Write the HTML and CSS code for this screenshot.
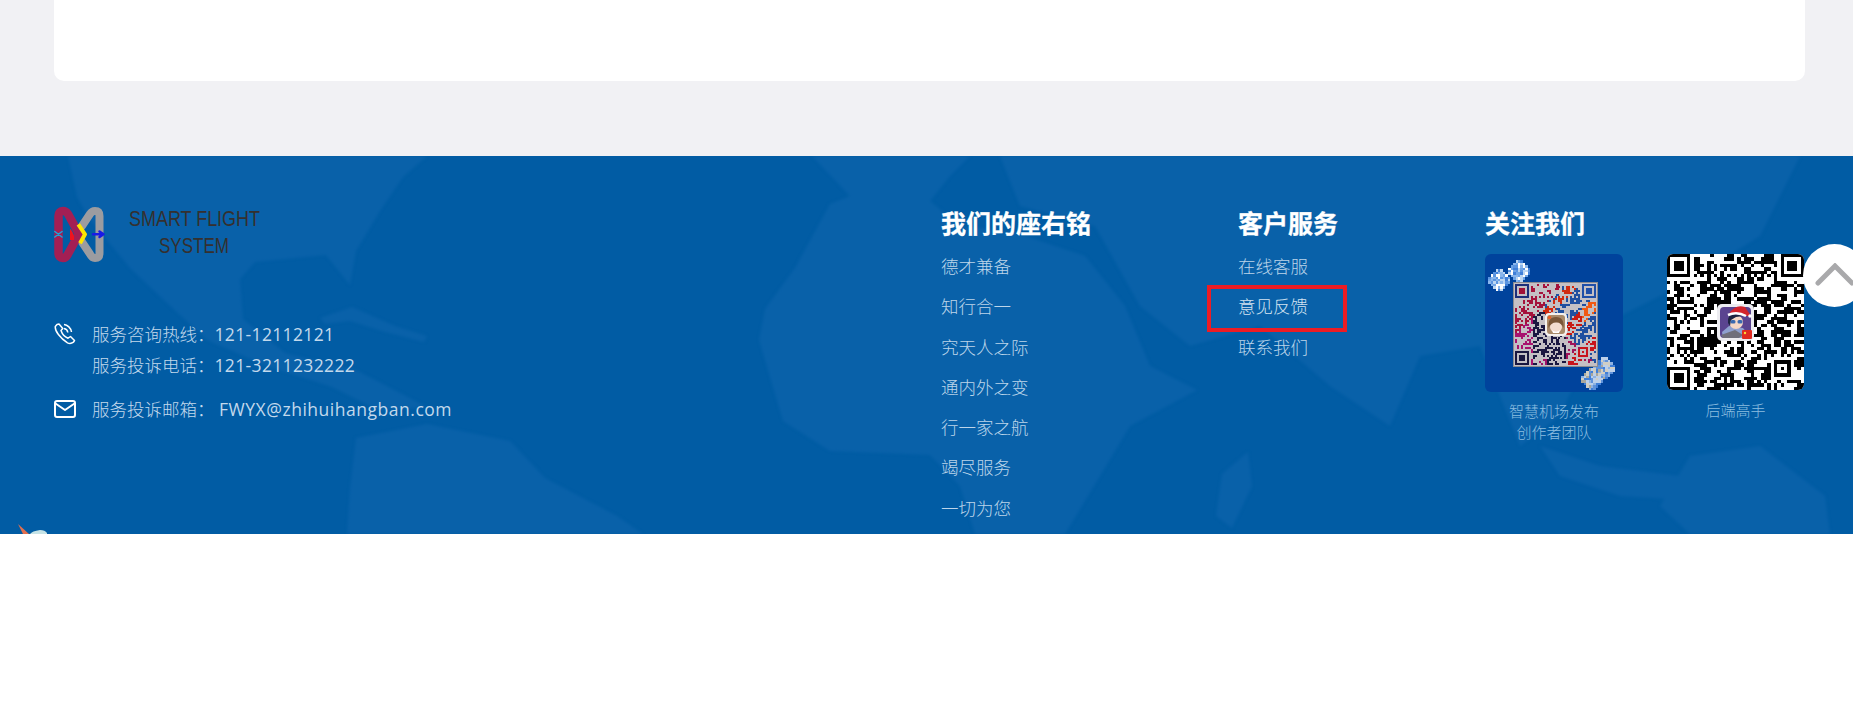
FILE: index.html
```html
<!DOCTYPE html>
<html lang="zh-CN">
<head>
<meta charset="utf-8">
<title>智慧航班</title>
<link rel="stylesheet" href="styles.css">
</head>
<body>
<div class="page">
  <section class="top">
    <div class="card"></div>
  </section>

  <footer class="footer">
    <svg class="map" viewBox="0 0 1853 378" preserveAspectRatio="none" aria-hidden="true">
      <path d="M68 0L77 41 89 62 130 112 166 146 207 184 267 210 332 231 380 255 427 251 356 214 285 197 243 163 240 123 255 106 326 99 350 129 356 95 380 55 403 21 427 0Z"/>
      <path d="M320 162L352 151 395 170 427 180 424 186 385 176 350 165 325 168Z"/>
      <path d="M356 282L427 268 510 285 545 322 617 360 643 378 347 378 350 332Z"/>
      <path d="M812 0L850 40 830 48 795 112 765 153 759 184 783 265 830 295 930 299 960 330 975 378 1065 378 1100 320 1130 270 1197 234 1150 210 1125 150 1085 100 1010 75 960 70 930 45 950 20 970 0Z"/>
      <path d="M1000 0L1020 50 1095 70 1140 150 1190 190 1260 170 1330 230 1390 270 1420 200 1480 190 1520 290 1560 260 1600 170 1680 130 1760 80 1800 0Z"/>
      <path d="M1222 318L1248 296 1252 330 1232 372 1216 360Z"/>
      <path d="M1540 290L1600 310 1680 320 1700 345 1620 340 1560 320Z"/>
      <path d="M1690 300L1760 290 1825 340 1830 378 1690 378 1660 350Z"/>
    </svg>

    <div class="footer-inner">
      <div class="brand">
        <svg class="logo" viewBox="0 -8 240 68" aria-label="Smart Flight System">
          <path class="logo-grey" d="M28 20L36 8Q38 5 41 5 45.500 5 45.500 10V47Q45.500 52 41 52 38 52 36 48L28 36"/>
          <path class="logo-crimson" d="M4.500 10Q4.500 5 9 5 12 5 14 8L25 28 14 48Q12 52 9 52 4.500 52 4.500 47Z"/>
          <path class="logo-yellow" d="M24.300 18.300L31 28.300 26 37.300"/>
          <path class="logo-red" d="M16 22.500Q21 28 20 34H16Z"/>
          <path class="logo-cyan" d="M.8 25.500L8 31M.8 31L8 25.500"/>
          <path class="logo-blue" d="M39 28.300H49.500M45.500 25.500L49.500 28.300 45.500 31"/>
          <text class="logo-text" x="75" y="19.500" textLength="131" lengthAdjust="spacingAndGlyphs">SMART FLIGHT</text>
          <text class="logo-text" x="105" y="46.500" textLength="70" lengthAdjust="spacingAndGlyphs">SYSTEM</text>
        </svg>

        <div class="contact-row">
          <svg class="contact-icon" viewBox="0 0 22 22" aria-hidden="true">
            <path d="M3 1.500L1.300 3.500C.8 8 6 15 13.500 19.800 15.500 20.800 17.500 20.600 19.500 19.200L20.500 17.500 16.500 13.500 14 15.200C11 14 8 10.500 7 7.500L8.800 5.500 5 1Z"/>
            <path d="M10 1.500C13.500 1.800 17 5 17.500 9M10 5.500C12 5.800 13.500 7.300 13.800 9.500"/>
          </svg>
          <div class="contact-lines">
            <div>服务咨询热线：<span class="num">121-12112121</span></div>
            <div>服务投诉电话：<span class="num">121-3211232222</span></div>
          </div>
        </div>
        <div class="contact-row contact-mail">
          <svg class="contact-icon" viewBox="0 0 22 18" aria-hidden="true">
            <rect x="1" y="1" width="20" height="16" rx="2"/>
            <path d="M1.500 3.500L11 10 20.500 3.500"/>
          </svg>
          <div class="contact-lines">
            <div>服务投诉邮箱： <span class="mail">FWYX@zhihuihangban.com</span></div>
          </div>
        </div>
      </div>

      <nav class="col col-motto">
        <h3 class="col-title">我们的座右铭</h3>
        <ul class="links">
          <li>德才兼备</li>
          <li>知行合一</li>
          <li>究天人之际</li>
          <li>通内外之变</li>
          <li>行一家之航</li>
          <li>竭尽服务</li>
          <li>一切为您</li>
        </ul>
      </nav>

      <nav class="col col-service">
        <h3 class="col-title">客户服务</h3>
        <ul class="links">
          <li>在线客服</li>
          <li class="marked">意见反馈</li>
          <li>联系我们</li>
        </ul>
      </nav>

      <div class="col col-follow">
        <h3 class="col-title">关注我们</h3>
        <div class="qr-row">
          <figure class="qr-item">
            <svg class="qr qr-blue" viewBox="0 0 138 138" aria-hidden="true">
              <g id="flakes" shape-rendering="crispEdges"></g>
              <rect class="qr-plate" x="28.500" y="28.500" width="84" height="84"/>
              <svg id="qr-color" x="30" y="30" width="81" height="81" viewBox="0 0 41 41" shape-rendering="crispEdges"></svg>
              <rect x="60" y="59" width="22" height="23" rx="4" fill="#f4f0ee"/>
              <rect x="62" y="61" width="18" height="19" rx="3" fill="#a98a6a"/>
              <ellipse cx="71" cy="73" rx="6" ry="5.500" fill="#f3dcd0"/>
              <path d="M63.500 74Q62.500 63 71 63 79.500 63 78.500 74 76 68 71 68.500 66 68.500 63.500 74Z" fill="#7a5638"/>
              <path d="M67 76Q71 79.500 75 76L74 79H68Z" fill="#fff"/>
              <circle cx="64.500" cy="63.500" r="1.800" fill="#e8602a"/>
            </svg>
            <figcaption class="qr-caption">智慧机场发布<br>创作者团队</figcaption>
          </figure>
          <figure class="qr-item">
            <svg class="qr qr-bw" viewBox="0 0 137 136" aria-hidden="true">
              <rect width="137" height="136" fill="#fff"/>
              <svg id="qr-mono" width="137" height="136" viewBox="0 0 41 41" preserveAspectRatio="none" shape-rendering="crispEdges"></svg>
              <rect x="50" y="50" width="37" height="37" rx="5" fill="#ececf0"/>
              <rect x="53" y="53" width="31" height="31" rx="4" fill="#5a4490"/>
              <path d="M55 78L62 72 76 74 84 84H56Z" fill="#8ea0cf"/>
              <path d="M54 81L68 76 76 81 72 84H56Z" fill="#6f6f7a"/>
              <circle cx="69" cy="68" r="7" fill="#f5d8c6"/>
              <path d="M61 69Q60 60 68 60L76 62 69 63 64 66 63 72Z" fill="#1d2440"/>
              <rect x="63.500" y="66" width="5" height="3.500" rx="1.500" fill="#3a6ab0"/>
              <rect x="70.500" y="66" width="5" height="3.500" rx="1.500" fill="#3a6ab0"/>
              <path d="M62 60Q68 50 78 53L84 62 78 62Q70 58 62 60Z" fill="#d3242c"/>
              <path d="M61 61Q70 57 79 62" fill="none" stroke="#fff" stroke-width="2.500"/>
              <circle cx="83" cy="62" r="1.800" fill="#fff"/>
              <rect x="75" y="76" width="10" height="9" rx="1" fill="#e02a20"/>
              <circle cx="78" cy="79" r="1.200" fill="#ffd83a"/>
            </svg>
            <figcaption class="qr-caption qr-caption-second">后端高手</figcaption>
          </figure>
        </div>
      </div>
    </div>

    <svg class="plane" viewBox="0 0 30 10" aria-hidden="true">
      <path d="M0 0L11 10H5Z" fill="#e26f4e"/>
      <path d="M12 10Q14 7 22 6 27 6 29 9V10Z" fill="#c6e3e6"/>
    </svg>
  </footer>

  <button class="to-top" type="button" aria-label="返回顶部">
    <svg viewBox="0 0 40 24" aria-hidden="true"><path d="M3 20L20 3 37 20"/></svg>
  </button>
</div>
<script src="qr.js"></script>
</body>
</html>
```

FILE: styles.css
```css
* { box-sizing: border-box; }

html, body {
  margin: 0;
  height: 100%;
  background: #fff;
  overflow: hidden;
}

body {
  font-family: "Open Sans", "Noto Sans CJK SC", sans-serif;
  font-size: 17.500px;
  font-weight: 300;
}

.page {
  position: relative;
  height: 718px;
  overflow: hidden;
  background: #fff;
}

.top {
  height: 156px;
  padding: 0 48px 0 54px;
  background: #f1f1f4;
}

.card {
  height: 81px;
  background: #fff;
  border-radius: 0 0 10px 10px;
}

.footer {
  position: relative;
  height: 378px;
  background: #015ca4;
  overflow: hidden;
}

.map {
  position: absolute;
  inset: 0;
  width: 100%;
  height: 100%;
  filter: blur(1.500px);
}

.map path { fill: #0961a9; }

.footer-inner {
  position: relative;
  display: flex;
  padding: 47px 0 0 54px;
}

.brand {
  width: 887px;
  margin-top: -5px;
}

.logo {
  display: block;
  width: 240px;
  height: 68px;
  margin-bottom: 52.500px;
}

.logo path { fill: none; stroke-linejoin: round; stroke-linecap: round; }
.logo .logo-grey { stroke: #9c9ca0; stroke-width: 8; }
.logo .logo-crimson { stroke: #a31f54; stroke-width: 8.500; }
.logo .logo-yellow { stroke: #ffe600; stroke-width: 4; stroke-linecap: butt; }
.logo .logo-red { fill: #f0141e; }
.logo .logo-cyan { stroke: #19a7dc; stroke-width: 1.500; }
.logo .logo-blue { stroke: #1a1ae6; stroke-width: 2.500; }

.logo-text {
  font-family: "Liberation Sans", sans-serif;
  font-size: 22.500px;
  font-weight: 400;
  fill: #35302f;
}

.contact-row {
  display: flex;
  color: #c3d9ec;
  line-height: 31px;
}

.contact-mail { margin-top: 13.500px; }

.num {
  font-weight: 400;
  letter-spacing: .35px;
}

.mail {
  font-weight: 400;
  letter-spacing: .52px;
}

.contact-icon {
  flex: none;
  width: 22px;
  height: 22px;
  margin: 4px 16px 0 0;
  fill: none;
  stroke: #fff;
  stroke-width: 1.500;
  stroke-linejoin: round;
}

.contact-mail .contact-icon {
  height: 18px;
  margin-top: 6px;
  stroke-width: 2;
}

.col-title {
  margin: 0 0 3px;
  color: #fff;
  font-size: 25px;
  font-weight: 700;
  line-height: 40px;
  -webkit-text-stroke: .3px #fff;
}

.col-motto { width: 297px; }
.col-service { width: 247px; }
.col-follow .col-title { margin-bottom: 11px; }

.links {
  margin: 0;
  padding: 0;
  list-style: none;
  color: #bcd5ea;
}

.links li {
  height: 40.300px;
  line-height: 40.300px;
}

.marked {
  position: relative;
  color: #d3e3f1;
}

.marked::after {
  content: "";
  box-sizing: border-box;
  position: absolute;
  left: -31px;
  top: -1px;
  width: 140px;
  height: 47px;
  border: 4.500px solid #ed1c24;
}

.qr-row {
  display: flex;
  align-items: flex-start;
  gap: 44px;
}

.qr-item {
  margin: 0;
}

.qr {
  display: block;
  border-radius: 6px;
}

.qr-blue {
  width: 138px;
  height: 138px;
  background: #00439c;
}

.qr-plate {
  fill: #c4c0c4;
  stroke: #8b8b90;
}

.qr-bw {
  width: 137px;
  height: 136px;
}

.qr-caption {
  margin-top: 9px;
  color: #8cbee0;
  font-size: 15px;
  line-height: 21px;
  text-align: center;
}

.qr-caption-second { margin-top: 9.500px; }

.plane {
  position: absolute;
  left: 18px;
  bottom: 0;
  width: 30px;
  height: 10px;
}

.to-top {
  position: absolute;
  left: 1803px;
  top: 244px;
  width: 63px;
  height: 63px;
  padding: 0;
  border: 0;
  border-radius: 50%;
  background: #fff;
}

.to-top svg {
  position: absolute;
  left: 12px;
  top: 19px;
  width: 40px;
  height: 24px;
  fill: none;
  stroke: #a9a9ab;
  stroke-width: 5;
  stroke-linecap: round;
}
```

FILE: qr.js
```js
(function () {
  var NS = "http://www.w3.org/2000/svg";
  var SIZE = 41;

  function rng(seed) {
    var s = seed;
    return function () {
      s = (s * 1664525 + 1013904223) >>> 0;
      return (s >>> 8) / 16777216;
    };
  }

  function matrix(seed, base) {
    var r = rng(seed), m = [], x, y;
    for (y = 0; y < SIZE; y++) {
      m.push([]);
      for (x = 0; x < SIZE; x++) {
        var prev = x > 0 ? m[y][x - 1] : 0;
        var up = y > 0 ? m[y - 1][x] : 0;
        var p = base + (prev ? 0.16 : 0) + (up ? 0.12 : 0) - (prev && up ? 0.06 : 0);
        m[y].push(r() < p ? 1 : 0);
      }
    }
    function box(ox, oy, n, ringInset) {
      for (var j = -1; j <= n; j++) {
        for (var i = -1; i <= n; i++) {
          var px = ox + i, py = oy + j;
          if (px < 0 || py < 0 || px >= SIZE || py >= SIZE) continue;
          var inside = i >= 0 && j >= 0 && i < n && j < n;
          var edge = i === 0 || j === 0 || i === n - 1 || j === n - 1;
          var core = i >= ringInset && j >= ringInset && i < n - ringInset && j < n - ringInset;
          m[py][px] = inside && (edge || core) ? 1 : 0;
        }
      }
    }
    box(0, 0, 7, 2);
    box(34, 0, 7, 2);
    box(0, 34, 7, 2);
    box(32, 32, 5, 2);
    for (var t = 8; t < 33; t++) {
      m[6][t] = t % 2 === 0 ? 1 : 0;
      m[t][6] = t % 2 === 0 ? 1 : 0;
    }
    return m;
  }

  function addRect(parent, x, y, w, h, fill) {
    var el = document.createElementNS(NS, "rect");
    el.setAttribute("x", x);
    el.setAttribute("y", y);
    el.setAttribute("width", w);
    el.setAttribute("height", h);
    el.setAttribute("fill", fill);
    parent.appendChild(el);
  }

  function draw(id, seed, base, colourAt) {
    var host = document.getElementById(id), m = matrix(seed, base);
    m.forEach(function (row, y) {
      row.forEach(function (on, x) {
        if (on) addRect(host, x, y, 1.02, 1.02, colourAt(x, y));
      });
    });
  }

  draw("qr-mono", 73, 0.38, function () { return "#000"; });

  draw("qr-color", 211, 0.3, function (x, y) {
    var diagonal = (x + y) / (2 * SIZE);
    var right = x > y;
    if (x < 8 && y < 8) return x > 1 && x < 5 && y > 1 && y < 5 ? "#a01238" : "#1b2f7a";
    if (x < 8 && y > 33) return "#1a1740";
    if (x > 33 && y < 8) return "#1f4fa8";
    if (right && Math.abs(diagonal - 0.36) < 0.035) return "#d02a10";
    if (right && Math.abs(diagonal - 0.6) < 0.05) return x > 33 ? "#f05a14" : "#c81a12";
    if (Math.abs(diagonal - 0.84) < 0.05 && x > 20) return "#c8141c";
    if (!right && diagonal > 0.3 && diagonal < 0.62) return x < 9 ? "#a8126e" : "#1a1740";
    if (!right && diagonal >= 0.62) return x < 16 ? "#a01468" : (x < 26 ? "#1a1740" : "#a0145a");
    return diagonal < 0.3 ? "#a5123c" : "#1f4fa0";
  });

  var flakes = document.getElementById("flakes");
  var r = rng(5);
  function cluster(cx, cy, radius, palette) {
    for (var y = -radius; y <= radius; y++) {
      for (var x = -radius; x <= radius; x++) {
        if (Math.abs(x) + Math.abs(y) > radius + 1) continue;
        addRect(flakes, cx + x * 2.4, cy + y * 2.4, 2.4, 2.4, palette[Math.floor(r() * palette.length)]);
      }
    }
  }
  var tint = ["#ffffff", "#bcd6f2", "#8ab6ec", "#6ea4e6", "#3f7fd8", "#5a94e0"];
  cluster(13, 25, 4, tint);
  cluster(33, 16, 4, tint);
  var warm = ["#d0cec4", "#bcd0ea", "#5f92da", "#8fb3e2", "#a9a79c", "#3f7fd8"];
  cluster(118, 113, 4, warm);
  cluster(106, 124, 4, warm);
})();
```
